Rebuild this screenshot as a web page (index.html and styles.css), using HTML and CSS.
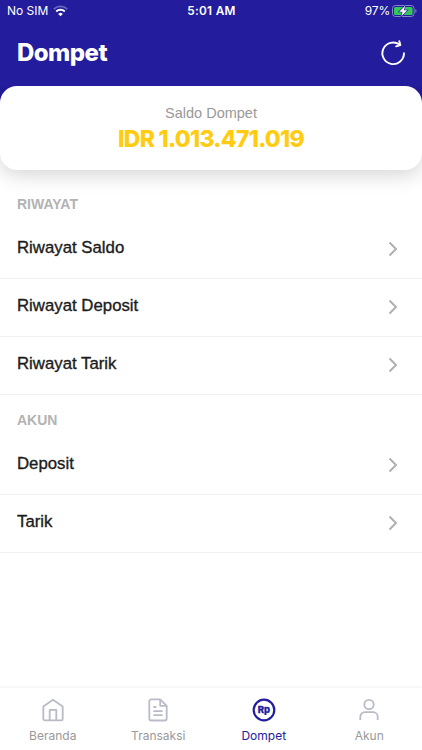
FILE: index.html
```html
<!DOCTYPE html>
<html lang="id">
<head>
  <meta charset="UTF-8">
  <meta name="viewport" content="width=device-width, initial-scale=1.0">
  <title>Dompet</title>
  <link rel="stylesheet" href="styles.css">
</head>
<body>
  <div id="app">
    <header class="header">
      <div class="status">
        <div class="status-left">
          <span>No SIM</span>
          <svg width="15" height="12" viewBox="0 0 15 12">
            <path d="M.8 4.1a9.7 9.7 0 0 1 13.4 0" fill="none" stroke="#6a66c3" stroke-width="1.8"/>
            <path d="M3.2 6.5a6.2 6.2 0 0 1 8.6 0" fill="none" stroke="#fff" stroke-width="1.9"/>
            <path d="M7.5 11.3L5.2 8.9a3.4 3.4 0 0 1 4.6 0z" fill="#fff"/>
          </svg>
        </div>
        <span class="time">5:01 AM</span>
        <div class="status-right">
          <span class="percent">97%</span>
          <svg width="25" height="12" viewBox="0 0 25 12">
            <rect x=".5" y=".5" width="21.6" height="11" rx="3" fill="none" stroke="#8783cd"/>
            <rect x="2" y="2" width="18.6" height="8" rx="1.6" fill="#35c759"/>
            <path d="M23.4 4v4c1.5-.6 1.5-3.4 0-4z" fill="#8783cd"/>
            <path d="M13.2 .8L7.2 6.7h3.4L9.3 11.2l6-5.9h-3.5z" fill="#fff" stroke="#231c9c" stroke-width="1.2" paint-order="stroke"/>
          </svg>
        </div>
      </div>
      <div class="title-bar">
        <h1>Dompet</h1>
        <svg class="refresh" width="26" height="28" viewBox="0 0 26 28">
          <path d="M24 14.300A10.800 10.800 0 1 1 19.500 5.500"/>
          <path d="M19.300 2.200l1.100 3.900-4.300 1.200"/>
        </svg>
      </div>
    </header>

    <div class="balance">
      <p class="balance-label">Saldo Dompet</p>
      <p class="balance-value">IDR 1.013.471.019</p>
    </div>

    <main>
      <h2 class="first">RIWAYAT</h2>
      <ul>
        <li><span>Riwayat Saldo</span><svg class="arrow" viewBox="0 0 10 16"><path d="M1.5 1.5L8 8l-6.5 6.5"/></svg></li>
        <li><span>Riwayat Deposit</span><svg class="arrow" viewBox="0 0 10 16"><path d="M1.5 1.5L8 8l-6.5 6.5"/></svg></li>
        <li><span>Riwayat Tarik</span><svg class="arrow" viewBox="0 0 10 16"><path d="M1.5 1.5L8 8l-6.5 6.5"/></svg></li>
      </ul>
      <h2>AKUN</h2>
      <ul>
        <li><span>Deposit</span><svg class="arrow" viewBox="0 0 10 16"><path d="M1.5 1.5L8 8l-6.5 6.5"/></svg></li>
        <li><span>Tarik</span><svg class="arrow" viewBox="0 0 10 16"><path d="M1.5 1.5L8 8l-6.5 6.5"/></svg></li>
      </ul>
    </main>

    <nav class="tabs">
      <a class="tab">
        <svg viewBox="0 0 24 24">
          <path d="M2.3 8.4L12 1.7l9.7 6.7v12.3a1.6 1.6 0 0 1-1.6 1.6H3.9a1.6 1.6 0 0 1-1.6-1.6z"/>
          <path d="M8.7 22V11.800h6.600V22"/>
        </svg>
        <span>Beranda</span>
      </a>
      <a class="tab">
        <svg viewBox="0 0 24 24">
          <path d="M14.2 1.3H5.300a2 2 0 0 0-2 2v17.200a2 2 0 0 0 2 2h13.400a2 2 0 0 0 2-2V7.800z"/>
          <path d="M14.2 1.3v6.500h6.500M7.400 9h3M7.400 13.200h9.200M7.400 17.200h9.200"/>
        </svg>
        <span>Transaksi</span>
      </a>
      <a class="tab active">
        <svg viewBox="0 0 24 24">
          <circle cx="12" cy="12" r="10.3"/>
          <text class="rp" x="12" y="15.3" text-anchor="middle">Rp</text>
        </svg>
        <span>Dompet</span>
      </a>
      <a class="tab">
        <svg viewBox="0 0 24 24">
          <circle cx="12" cy="6.500" r="4.700"/>
          <path d="M3.300 22v-3.300a4.500 4.500 0 0 1 4.500-4.500h8.400a4.500 4.500 0 0 1 4.500 4.500V22"/>
        </svg>
        <span>Akun</span>
      </a>
    </nav>
  </div>
</body>
</html>
```

FILE: styles.css
```css
* {
  box-sizing: border-box;
  margin: 0;
  padding: 0;
}

body {
  background: #fff;
  font-family: "Liberation Sans", Arial, sans-serif;
}

#app {
  display: flex;
  flex-direction: column;
  height: 750px;
  overflow: hidden;
}

.header {
  height: 104px;
  background: #231c9c;
  color: #fff;
}

.status {
  display: grid;
  grid-template-columns: 1fr auto 1fr;
  align-items: center;
  height: 22px;
  padding: 0 6px 0 7px;
  font: 12px/22px Inter, sans-serif;
}

.status-left,
.status-right {
  display: flex;
  align-items: center;
  gap: 5px;
}

.status-right {
  justify-content: flex-end;
  gap: 2px;
  margin-right: -1px;
}

.percent {
  letter-spacing: -.2px;
}

.time {
  font-weight: 600;
  font-size: 11.8px;
  letter-spacing: .3px;
}

.title-bar {
  display: flex;
  align-items: center;
  justify-content: space-between;
  height: 62px;
  padding: 0 16px 0 17px;
}

h1 {
  font: 800 24px/30px Inter, sans-serif;
  letter-spacing: -.55px;
}

.refresh {
  fill: none;
  stroke: #fff;
  stroke-width: 1.9;
  stroke-linecap: round;
  stroke-linejoin: round;
}

.balance {
  position: relative;
  height: 84px;
  margin-top: -18px;
  padding-top: 17px;
  border-radius: 17px;
  background: #fff;
  box-shadow: 0 5px 20px rgba(0, 0, 0, .17);
  clip-path: inset(0 0 -40px);
  text-align: center;
}

.balance-label {
  color: #999;
  font-size: 14.5px;
  line-height: 20px;
}

.balance-value {
  color: #fc1;
  font: 800 23px/32px Inter, sans-serif;
  letter-spacing: -.7px;
}

main {
  flex: 1;
}

h2 {
  height: 42px;
  padding: 16px 17px 0;
  color: #b3b3b3;
  font-size: 14px;
  line-height: 18px;
}

h2.first {
  height: 51px;
  padding-top: 25px;
}

ul {
  list-style: none;
}

li {
  display: flex;
  align-items: center;
  justify-content: space-between;
  height: 58px;
  padding: 0 24px 2px 17px;
  border-bottom: 1px solid #f1f1f1;
  color: #1c1c1c;
  font-size: 16.8px;
  line-height: 20px;
  -webkit-text-stroke: .35px #1c1c1c;
}

li span {
  margin-top: -2px;
}

.arrow {
  width: 10px;
  height: 16px;
  fill: none;
  stroke: #b0b0b0;
  stroke-width: 2;
}

.tabs {
  display: grid;
  grid-template-columns: repeat(4, 1fr);
  height: 62px;
  background: #fff;
  box-shadow: 0 -1px 3px rgba(0, 0, 0, .06);
}

.tab {
  display: flex;
  flex-direction: column;
  align-items: center;
  padding-top: 10px;
  color: #999;
  font: 12px/16px Inter, sans-serif;
}

.tab svg {
  width: 24px;
  height: 24px;
  margin-bottom: 6px;
  fill: none;
  stroke: #b9bcc7;
  stroke-width: 1.8;
  stroke-linejoin: round;
}

.tab.active {
  color: #231c9c;
}

.tab.active svg {
  stroke: #231c9c;
  stroke-width: 2.2;
}

.tab.active .rp {
  fill: #231c9c;
  stroke-width: .3;
  font: 800 9.5px Inter, sans-serif;
}
```
